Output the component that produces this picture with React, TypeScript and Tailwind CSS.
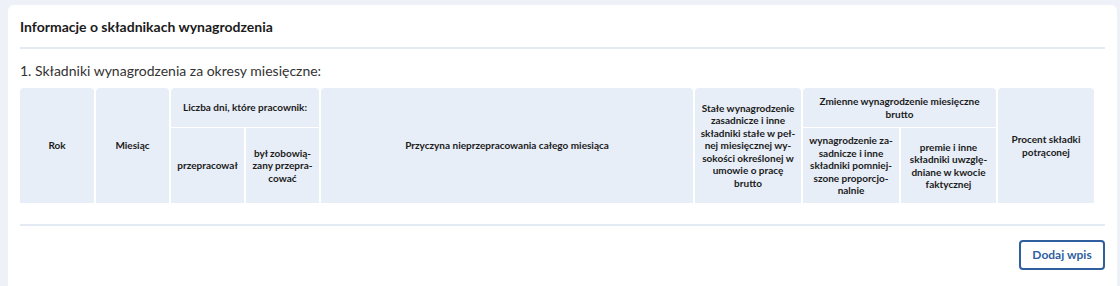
export default function App() {
  const cell =
    "bg-[#e7eef7] flex items-center justify-center text-center whitespace-nowrap text-[10px] leading-[12.5px] font-bold text-[#1b1b1b]";

  return (
    <div className="h-[286px] w-[1120px] overflow-hidden bg-[#eef2f8] pl-2 pr-[3px] pt-[5px] font-['Lato',sans-serif]">
      <div className="h-[300px] rounded-t-md bg-white px-3">
        {/* Title */}
        <div className="border-b-2 border-[#e3eaf4] pt-[13px] pb-[11px]">
          <h2 className="text-[14px] leading-[18px] font-bold text-[#1b1b1b]">
            Informacje o składnikach wynagrodzenia
          </h2>
        </div>

        <h3 className="mt-[13px] text-[14px] leading-[18px] text-[#333]">
          1. Składniki wynagrodzenia za okresy miesięczne:
        </h3>

        {/* Table header */}
        <div className="mt-[8px] mr-[11px] grid h-[115px] grid-cols-[74px_73px_73px_73px_1fr_106px_96px_95px_96px] grid-rows-[39px_1fr] gap-x-[2px] gap-y-px">
          <div className={`${cell} row-span-2 rounded-t`}>Rok</div>
          <div className={`${cell} row-span-2 rounded-t`}>Miesiąc</div>
          <div className={`${cell} col-span-2 rounded-t`}>Liczba dni, które pracownik:</div>
          <div className={`${cell} row-span-2 rounded-t`}>Przyczyna nieprzepracowania całego miesiąca</div>
          <div className={`${cell} row-span-2 rounded-t`}>
            Stałe wynagrodzenie
            <br />
            zasadnicze i inne
            <br />
            składniki stałe w peł-
            <br />
            nej miesięcznej wy-
            <br />
            sokości określonej w
            <br />
            umowie o pracę
            <br />
            brutto
          </div>
          <div className={`${cell} col-span-2 rounded-t`}>
            Zmienne wynagrodzenie miesięczne
            <br />
            brutto
          </div>
          <div className={`${cell} row-span-2 rounded-t`}>
            Procent składki
            <br />
            potrąconej
          </div>
          <div className={cell}>przepracował</div>
          <div className={cell}>
            był zobowią-
            <br />
            zany przepra-
            <br />
            cować
          </div>
          <div className={cell}>
            wynagrodzenie za-
            <br />
            sadnicze i inne
            <br />
            składniki pomniej-
            <br />
            szone proporcjo-
            <br />
            nalnie
          </div>
          <div className={cell}>
            premie i inne
            <br />
            składniki uwzglę-
            <br />
            dniane w kwocie
            <br />
            faktycznej
          </div>
        </div>

        <div className="mt-[21px] border-t-2 border-[#e3eaf4]" />

        <div className="mt-[14px] flex justify-end">
          <button className="h-[30px] w-[86px] rounded border-2 border-[#2f5f9f] text-[12px] font-bold text-[#2f5f9f]">
            Dodaj wpis
          </button>
        </div>
      </div>
    </div>
  );
}
